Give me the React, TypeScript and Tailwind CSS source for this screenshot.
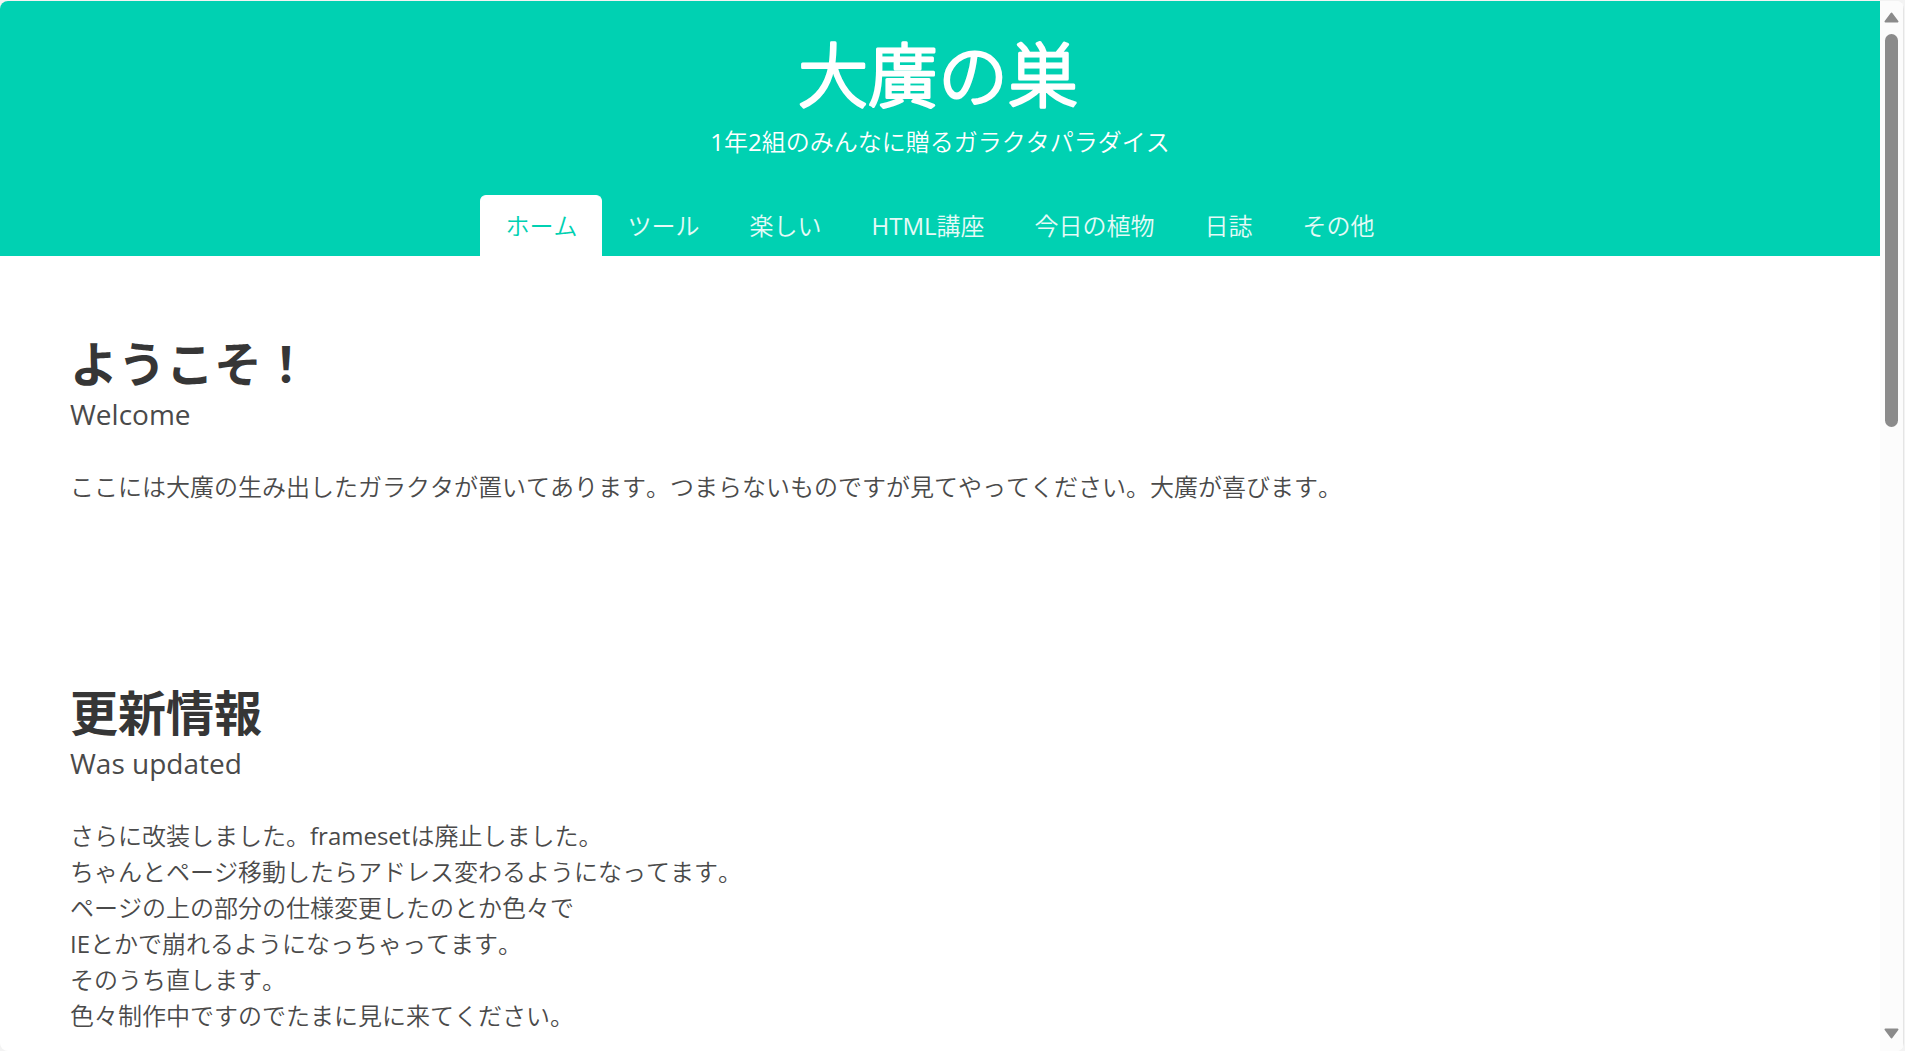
import React, { useState } from 'react';

const tabs = ['ホーム', 'ツール', '楽しい', 'HTML講座', '今日の植物', '日誌', 'その他'];

const sections = [
  {
    title: 'ようこそ！',
    subtitle: 'Welcome',
    lines: [
      'ここには大廣の生み出したガラクタが置いてあります。つまらないものですが見てやってください。大廣が喜びます。',
    ],
  },
  {
    title: '更新情報',
    subtitle: 'Was updated',
    lines: [
      'さらに改装しました。framesetは廃止しました。',
      'ちゃんとページ移動したらアドレス変わるようになってます。',
      'ページの上の部分の仕様変更したのとか色々で',
      'IEとかで崩れるようになっちゃってます。',
      'そのうち直します。',
      '色々制作中ですのでたまに見に来てください。',
    ],
  },
];

// Logo text with rounded strokes
const Logo: React.FC = () => (
  <h1 className="mt-4">
    <svg width="300" height="107" viewBox="0 0 300 107" className="overflow-visible">
      <text
        x="148"
        y="85"
        textAnchor="middle"
        fill="#fff"
        stroke="#fff"
        strokeWidth="3"
        strokeLinejoin="round"
        className="text-[70px] font-['Noto_Sans_CJK_JP',sans-serif] font-light"
      >
        大廣の巣
      </text>
    </svg>
  </h1>
);

const Header: React.FC = () => {
  const [activeTab, setActiveTab] = useState('ホーム');

  return (
    <header className="bg-[#00d1b2] text-white flex flex-col items-center">
      <Logo />
      <p className="text-2xl leading-9">1年2組のみんなに贈るガラクタパラダイス</p>
      <nav className="mt-[35px] flex">
        {tabs.map((tab) => (
          <a
            key={tab}
            href="#"
            onClick={() => setActiveTab(tab)}
            className={`px-6 pt-3 pb-3 border border-b-0 rounded-t-md text-2xl leading-9 ${
              activeTab === tab ? 'bg-white border-white text-[#00d1b2]' : 'border-transparent text-white/90'
            }`}
          >
            {tab}
          </a>
        ))}
      </nav>
    </header>
  );
};

const Scrollbar: React.FC = () => (
  <div className="w-6 shrink-0 flex flex-col items-center bg-[#fcfcfc] border-r border-[#e5e5e5] pt-[11px] pb-3">
    <svg width="15" height="11" viewBox="0 0 15 11" className="shrink-0">
      <path d="M7.5 1.5 L13.5 9.5 H1.5 Z" fill="#8b8b8b" stroke="#8b8b8b" strokeWidth="2" strokeLinejoin="round" />
    </svg>
    <div className="mt-[11px] w-[13px] flex-1">
      <div className="h-[39.5%] rounded-full bg-[#8b8b8b]" />
    </div>
    <svg width="15" height="11" viewBox="0 0 15 11" className="shrink-0">
      <path d="M7.5 9.5 L13.5 1.5 H1.5 Z" fill="#8b8b8b" stroke="#8b8b8b" strokeWidth="2" strokeLinejoin="round" />
    </svg>
  </div>
);

const App: React.FC = () => (
  <div className="h-screen bg-[#f3f3f3] pt-px pr-px font-['Open_Sans','Noto_Sans_CJK_JP_DemiLight','Noto_Sans_CJK_JP',sans-serif] font-normal [font-kerning:none]">
    <div className="h-full flex overflow-hidden rounded-lg bg-white">
      <div className="flex-1 min-w-0">
        <Header />
        <main>
          {sections.map((section) => (
            <section key={section.title} className="px-[70px] pt-[81px] pb-[100px]">
              <h2 className="text-5xl leading-[54px] font-['Open_Sans','Noto_Sans_CJK_JP',sans-serif] font-bold text-[#363636]">
                {section.title}
              </h2>
              <p className="text-[28px] leading-[38px] mt-1 text-[#4a4a4a]">{section.subtitle}</p>
              <div className="mt-9 text-2xl leading-9 text-[#4a4a4a]">
                {section.lines.map((line) => (
                  <p key={line}>{line}</p>
                ))}
              </div>
            </section>
          ))}
        </main>
      </div>
      <Scrollbar />
    </div>
  </div>
);

export default App;
